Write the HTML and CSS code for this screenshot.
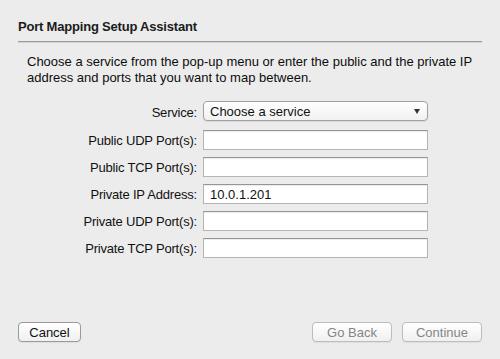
FILE: index.html
```html
<!DOCTYPE html>
<html>

<head>
    <title>Port Mapping Setup Assistant</title>
    <link rel="stylesheet" href="styles.css">
</head>

<body>
    <div class="sheet">
        <h1 class="title">Port Mapping Setup Assistant</h1>
        <div class="divider"></div>
        <p class="intro">Choose a service from the pop-up menu or enter the public and the private IP address and ports that you want to map between.</p>

        <div class="form">
            <label class="field-label">Service:</label>
            <div class="popup">
                <span>Choose a service</span>
                <span class="arrow"></span>
            </div>

            <label class="field-label">Public UDP Port(s):</label>
            <input class="field" type="text" value="">

            <label class="field-label">Public TCP Port(s):</label>
            <input class="field" type="text" value="">

            <label class="field-label">Private IP Address:</label>
            <input class="field" type="text" value="10.0.1.201">

            <label class="field-label">Private UDP Port(s):</label>
            <input class="field" type="text" value="">

            <label class="field-label">Private TCP Port(s):</label>
            <input class="field" type="text" value="">
        </div>

        <div class="buttons">
            <button class="btn">Cancel</button>
            <div class="nav">
                <button class="btn btn-wide" disabled>Go Back</button>
                <button class="btn btn-wide" disabled>Continue</button>
            </div>
        </div>
    </div>
</body>

</html>
```

FILE: styles.css
```css
html,
body {
    margin: 0;
    background: #ececec;
}

body {
    font-family: "Liberation Sans", Arial, sans-serif;
    font-size: 13px;
    color: #111;
}

.sheet {
    height: 359px;
    box-sizing: border-box;
    padding: 19px 18px 17px 18px;
    display: flex;
    flex-direction: column;
}

.title {
    margin: 0;
    font-size: 13px;
    line-height: 16px;
    font-weight: bold;
    color: #1b1b1b;
    letter-spacing: -0.2px;
}

.divider {
    margin-top: 6px;
    height: 1px;
    background: #9c9c9c;
    border-bottom: 1px solid #d2d2d2;
}

.intro {
    margin: 11px 0 0 9px;
    line-height: 16px;
    color: #0d0d0d;
}

.form {
    margin-top: 15px;
    display: grid;
    grid-template-columns: 179px 225px;
    column-gap: 6px;
    row-gap: 7px;
    align-items: center;
}

.field-label {
    text-align: right;
    letter-spacing: -0.2px;
}

.popup {
    height: 20px;
    box-sizing: border-box;
    margin-bottom: 2px;
    border: 1px solid #a0a0a0;
    border-radius: 4px;
    background: linear-gradient(#ffffff, #f1f1f1);
    box-shadow: 0 1px 1px rgba(0, 0, 0, 0.08);
    display: flex;
    align-items: center;
    justify-content: space-between;
    padding: 0 7px 0 6px;
}

.arrow {
    width: 0;
    height: 0;
    border-left: 3px solid transparent;
    border-right: 3px solid transparent;
    border-top: 5px solid #333;
}

.field {
    height: 20px;
    box-sizing: border-box;
    margin: 0;
    padding: 0 6px;
    border: 1px solid #b4b4b4;
    border-top-color: #959595;
    background: #fff;
    box-shadow: inset 0 1px 1px rgba(0, 0, 0, 0.08);
    font-family: inherit;
    font-size: 13px;
    color: #111;
    outline: none;
}

.buttons {
    margin-top: auto;
    display: flex;
    justify-content: space-between;
}

.nav {
    display: flex;
    gap: 10px;
}

.btn {
    height: 20px;
    width: 63px;
    padding: 0;
    border: 1px solid #9a9a9a;
    border-radius: 4px;
    background: linear-gradient(#ffffff, #f0f0f0);
    box-shadow: 0 1px 1px rgba(0, 0, 0, 0.06);
    font-family: inherit;
    font-size: 13px;
    color: #111;
}

.btn-wide {
    width: 80px;
}

.btn:disabled {
    border-color: #bdbdbd;
    color: #858585;
}
```
